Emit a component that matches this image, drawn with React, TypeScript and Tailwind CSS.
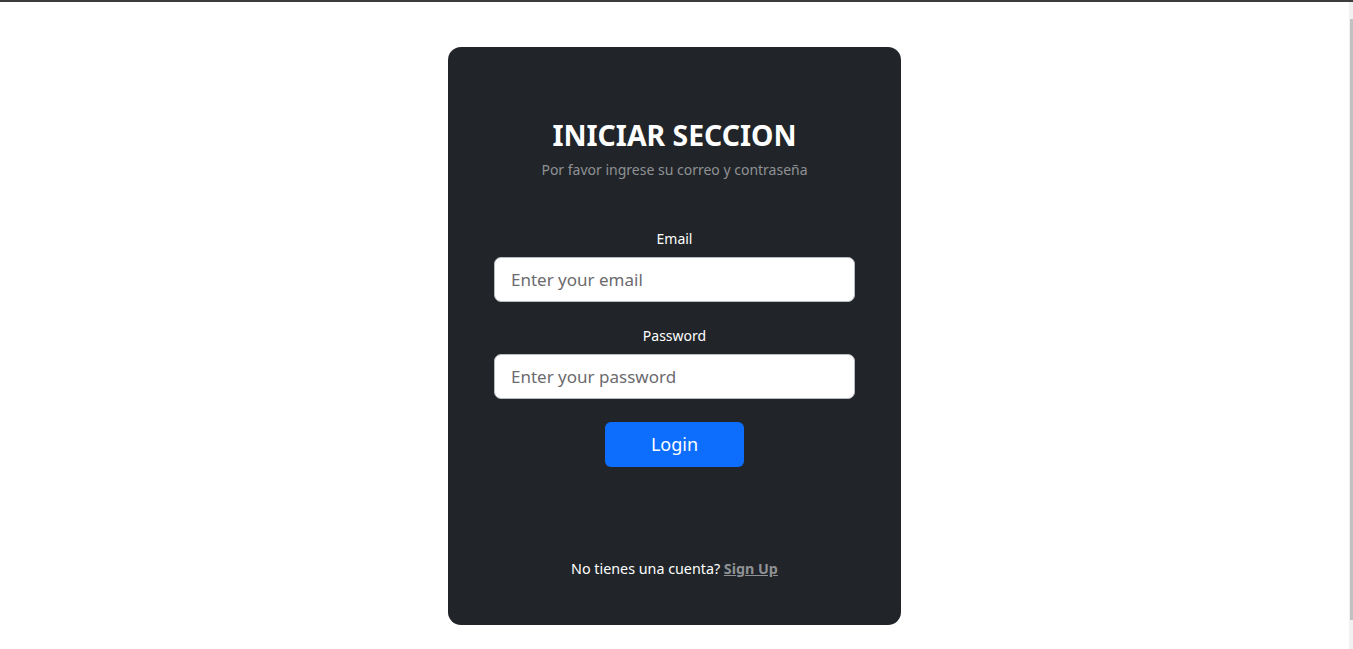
const App = () => {
  return (
    <div className="flex min-h-screen w-full border-t-2 border-[#3c3c3c] bg-white font-['Noto_Sans',sans-serif]">
      {/* PAGE */}
      <main className="flex flex-1 justify-center pt-[45px]">
        <div className="flex h-[578px] w-[453px] flex-col items-center rounded-[13px] bg-[#212529] pt-[71px]">
          <h1 className="text-[28.4px] font-bold leading-[34px] text-white">INICIAR SECCION</h1>
          <p className="mt-[7px] text-[14px] leading-[22px] text-[#8f9194]">
            Por favor ingrese su correo y contraseña
          </p>

          <form className="mt-[47px] flex w-[361px] flex-col items-center" onSubmit={(e) => e.preventDefault()}>
            <label htmlFor="email" className="text-[14px] leading-[21px] text-white">
              Email
            </label>
            <input
              id="email"
              type="email"
              placeholder="Enter your email"
              className="mt-[8px] h-[45px] w-full rounded-[7px] border border-[#b9bcc0] bg-white px-4 text-[17px] text-[#212529] outline-none placeholder:text-[#6c6a6e]"
            />

            <label htmlFor="password" className="mt-[23px] text-[14px] leading-[21px] text-white">
              Password
            </label>
            <input
              id="password"
              type="password"
              placeholder="Enter your password"
              className="mt-[8px] h-[45px] w-full rounded-[7px] border border-[#b9bcc0] bg-white px-4 text-[17px] text-[#212529] outline-none placeholder:text-[#6c6a6e]"
            />

            <button
              type="submit"
              className="mt-[23px] h-[45px] w-[139px] rounded-[6px] bg-[#0d6efd] text-[18px] text-white"
            >
              Login
            </button>
          </form>

          <p className="mt-[91px] text-[14.3px] leading-[21px] text-white">
            No tienes una cuenta?{' '}
            <a href="#" className="font-bold text-[#8f9194] underline">
              Sign Up
            </a>
          </p>
        </div>
      </main>

      {/* SCROLLBAR STRIP */}
      <div className="flex w-[4px] flex-col bg-[#f1f1f1] pl-[1px]">
        <div className="mt-[17px] h-[601px] w-[3px] bg-[#c1c1c1]" />
      </div>
    </div>
  );
};

export default App;
